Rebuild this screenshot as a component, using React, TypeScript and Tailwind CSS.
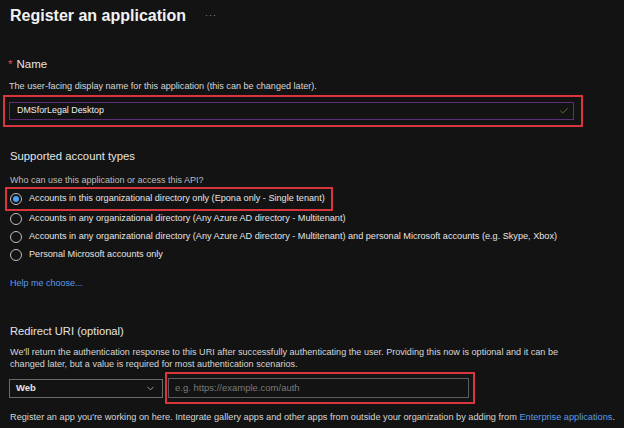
import { Check, ChevronDown } from "lucide-react";

const options = [
  "Accounts in this organizational directory only (Epona only - Single tenant)",
  "Accounts in any organizational directory (Any Azure AD directory - Multitenant)",
  "Accounts in any organizational directory (Any Azure AD directory - Multitenant) and personal Microsoft accounts (e.g. Skype, Xbox)",
  "Personal Microsoft accounts only",
];

function Radio({ checked }: { checked?: boolean }) {
  return (
    <span className="w-[12px] h-[12px] rounded-full border border-[#bdbdbd] flex items-center justify-center shrink-0">
      {checked && <span className="w-[6px] h-[6px] rounded-full bg-[#4ca0f0]" />}
    </span>
  );
}

export default function App() {
  return (
    <div className="w-[624px] h-[428px] overflow-hidden bg-[#131313] text-[#e4e4e4] font-['Liberation_Sans',Arial,sans-serif] flex flex-col">
      <div className="h-[32px] pl-[10px] flex items-center">
        <h1 className="text-[16px] leading-[24px] font-semibold text-[#f2f2f2]">Register an application</h1>
        <span className="ml-[19px] text-[9px] text-[#8c8c8c] tracking-[1px]">···</span>
      </div>

      <div className="mt-[25px] h-[16px] pl-[8px] flex items-center text-[11.5px]">
        <span className="text-[#e05050] mr-[4px]">*</span>
        <span>Name</span>
      </div>
      <div className="mt-[8px] h-[12px] pl-[9px] flex items-center text-[9.1px] text-[#d6d6d6]">
        The user-facing display name for this application (this can be changed later).
      </div>
      <div className="mt-[2px] ml-[3px] w-[580px] h-[32px] border-2 border-[#d8363c] flex items-center pl-[4px] pr-[7px]">
        <div className="flex-1 h-[18px] border border-[#5b2f78] flex items-center pl-[7px] pr-[4px]">
          <span className="flex-1 text-[8.9px] text-[#f0f0f0]">DMSforLegal Desktop</span>
          <Check size={10} strokeWidth={2} className="text-[#5e8a3c]" />
        </div>
      </div>

      <div className="mt-[21px] h-[16px] pl-[10px] flex items-center text-[11.3px]">Supported account types</div>
      <div className="mt-[11px] h-[12px] pl-[10px] flex items-center text-[9px] text-[#bdbdbd]">
        Who can use this application or access this API?
      </div>
      <div className="ml-[5px] w-[328px] h-[24px] border-2 border-[#d8363c] flex items-center pl-[3px] gap-[7px] text-[9.15px] whitespace-nowrap">
        <Radio checked />
        <span>{options[0]}</span>
      </div>
      <div className="-mt-[1px] flex flex-col">
        {options.slice(1).map((o) => (
          <div key={o} className="h-[18px] pl-[10px] flex items-center gap-[7px] text-[9.15px] whitespace-nowrap">
            <Radio />
            <span>{o}</span>
          </div>
        ))}
      </div>
      <div className="mt-[14px] h-[12px] pl-[10px] flex items-center text-[9px] text-[#5a9be8]">Help me choose...</div>

      <div className="mt-[33px] h-[16px] pl-[10px] flex items-center text-[11.2px]">Redirect URI (optional)</div>
      <p className="mt-[7px] ml-[10px] w-[565px] text-[9.1px] leading-[12px] text-[#d6d6d6]">
        We'll return the authentication response to this URI after successfully authenticating the user. Providing this now is optional and it can be changed later, but a value is required for most authentication scenarios.
      </p>
      <div className="mt-[2px] h-[32px] pl-[9px] flex items-center">
        <div className="w-[154px] h-[19px] border border-[#6a6a6a] flex items-center pl-[6px] pr-[6px] text-[9.5px] font-semibold">
          <span className="flex-1">Web</span>
          <ChevronDown size={11} strokeWidth={1.5} className="text-[#cfcfcf]" />
        </div>
        <div className="ml-[2px] w-[310px] h-[32px] border-2 border-[#d8363c] flex items-center pl-[1px] pr-[4px]">
          <div className="flex-1 h-[20px] border border-[#5c5c5c] flex items-center pl-[6px] text-[9.5px] text-[#7a7a7a]">
            e.g. https://example.com/auth
          </div>
        </div>
      </div>
      <div className="mt-[8px] h-[12px] pl-[10px] flex items-center text-[9.2px] text-[#d6d6d6] whitespace-nowrap">
        Register an app you're working on here. Integrate gallery apps and other apps from outside your organization by adding from&nbsp;
        <span className="text-[#5a9be8]">Enterprise applications</span>.
      </div>
    </div>
  );
}
